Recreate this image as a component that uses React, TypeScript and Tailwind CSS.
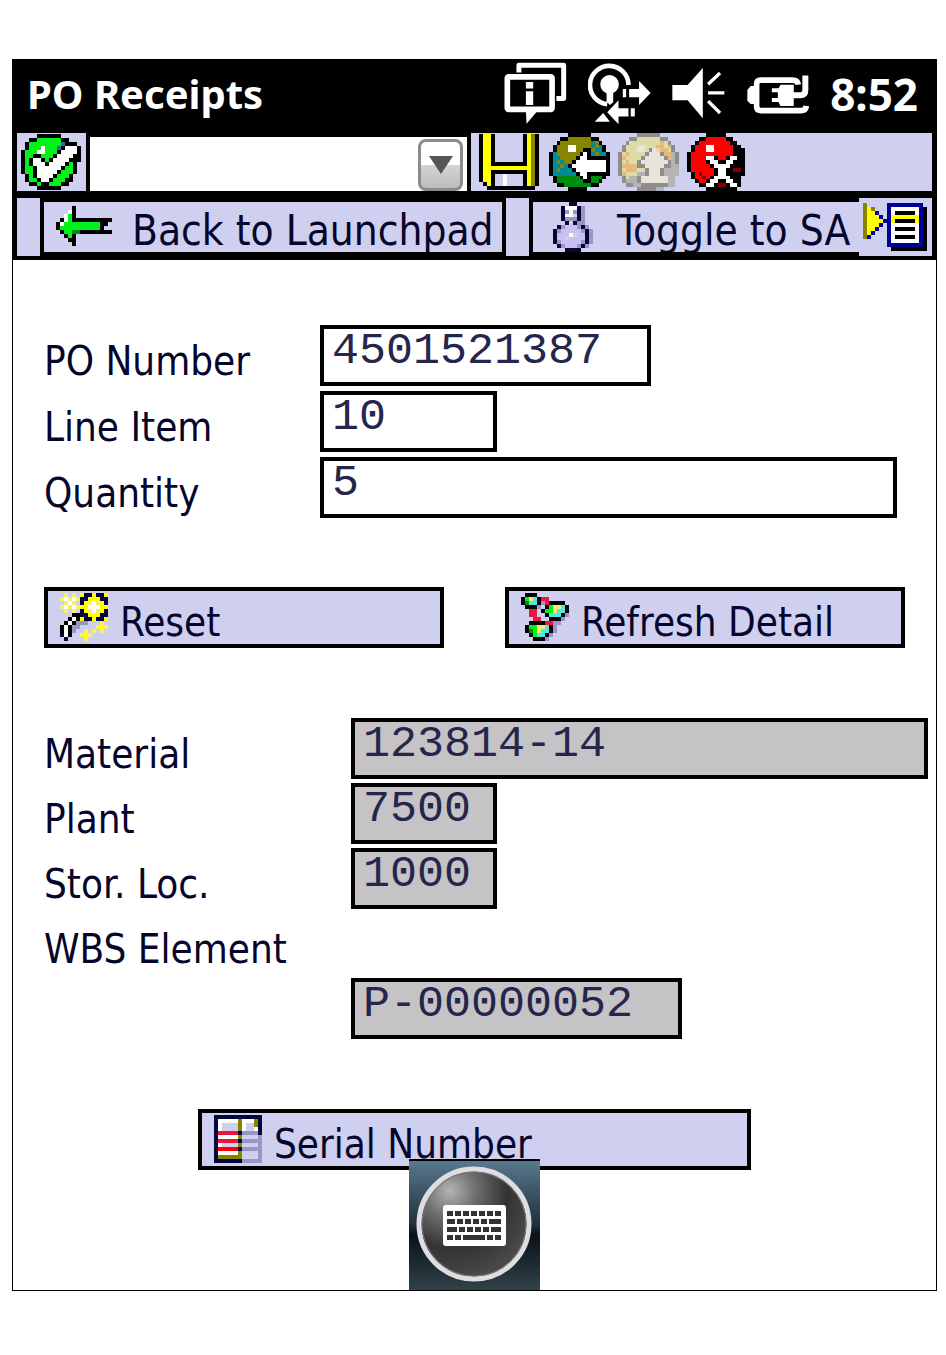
import React, { useState } from "react";
import clsx from "clsx";

const palette: Record<string, string> = {
  K: "#000000",
  W: "#ffffff",
  G: "#00f218",
  E: "#008c10",
  B: "#1c6fae",
  O: "#858500",
  T: "#008a98",
  R: "#ff0000",
  D: "#8a0000",
  Y: "#ffff00",
  y: "#f5f06a",
  L: "#cfcfef",
  P: "#9a96c4",
  V: "#c8c0f0",
  N: "#06063c",
  U: "#00009a",
  g: "#8d8d8d",
  h: "#b4b4b4",
  k: "#dcdca4",
  o: "#e6b87c",
  w: "#e9e4da",
  C: "#4fe6e8",
  S: "#ee1440",
};

const okIcon = [
  "....KKKKKK.....",
  "..KKGGGGGGKK...",
  ".KGGGGGGGGBKKK.",
  ".KGGGWGGGBKWWWK",
  "KGGGWWGGGKWWWWK",
  "KGGKKGGGKWWWWKK",
  "KGKWWKGKWWWWKKK",
  "KGKWWWKWWWWKGK.",
  "KGGKWWWWWWKGGK.",
  "KGGKWWWWWKGGGK.",
  ".KGKWWWWKGGGK..",
  ".KGGKWWKGGGKK..",
  "..KKGKKGGGKK...",
  "....KKKKKK.....",
];

const saveIcon = [
  "KYYKLLLLLLLKYOK",
  "KYYKLLLLLLLKYOK",
  "KYYKLLLLLLLKYOK",
  "KYYKLLLLLLLKYOK",
  "KYYKLLLLLLLKYOK",
  "KYYKLLLLLLLKYOK",
  "KYYKLLLLLLLKYOK",
  "KYYKKKKKKKKKYOK",
  "KYYYYYYYYYYYYOK",
  "KYYKKKKKKKKKYOK",
  "KYYKLLWLLLLKYOK",
  "KYYKLLWLLLLKYOK",
  ".KYKLLWLLLLKYOK",
  "..KKKKKKKKKKKK.",
];

const backIcon = [
  ".....KKKKKK.....",
  "...KKOOOOOOKK...",
  "..KOOOOOOOOTOK..",
  ".KOOOWWOOOOTOTK.",
  ".KOOOWWOOKKOTTK.",
  "KTOOOOOOKWKTOTTK",
  "KTTOOOOKWWKKKKKK",
  "KTOTOOKWWWWWWWWK",
  "KTTOTKWWWWWWWWWK",
  "KTOTTTKWWWWWWWWK",
  "KTTTTTTKWWKKKKKK",
  ".KEEEEEEKWKEEEK.",
  ".KEEEEEEEKKEEK..",
  "..KKEEEEEEEKK...",
  ".....KKKKK......",
];

const upIcon = [
  ".....gggggg.....",
  "...ggkkkkkkgg...",
  "..gkkkkkkkkokg..",
  ".gkkkwwkkkookog.",
  ".gkkkwwkgwkookg.",
  "gkokkkkgwwwgoohg",
  "gokkkkgwwwwwgohg",
  "gkokkgwwwwwwwghg",
  "gooooggwwwwwgghh",
  "gkoookkgwwwghhhh",
  "gokkkhhgwwwghhhh",
  ".gkhhgwwwwwwwhh.",
  ".ghhhgwwwwwwwhh.",
  "..gghhggggggghh.",
  ".....ggggghh....",
];

const cancelIcon = [
  ".....KKKKK.....",
  "...KKRRRRRKK...",
  "..KRRRRRRRRKK..",
  ".KRRRWWRRRRRKK.",
  ".KRRRWWRRRRRKKK",
  "KRRRRRRRRRRRKKK",
  "KRRRRWWKRRKWWKK",
  "KRRRRKWWKKWWKKK",
  "KRRRRRKWWWWKKKK",
  "KRRRRRRKWWKKDDK",
  ".KRDRRRKWWKKKKK",
  ".KRRDRKWWWWKKK.",
  "..KRRKWWKKWWKK.",
  "...KKWWKDDKWWK.",
  ".....KKKKKKKK..",
];

const arrowIcon = [
  "....K.........",
  "...WK.........",
  "..WGK.........",
  ".KWGKKKKKKKKKK",
  "KWGGGGGGGGGKK.",
  "KGGGGGGGGGGK..",
  ".KGGEEKKKKKKKK",
  "..KGK.........",
  "...KK.........",
  "....K.........",
];

const bulbIcon = [
  "....NN....",
  "..NWWWNP..",
  "..NPWPNP..",
  "..NWWLNP..",
  "..NPPPNP..",
  "...NLNPP..",
  ".NPVVVPNP.",
  "NPVVVVVPNP",
  "NVVVWLVVNP",
  "NVVLVVVVNP",
  "NPVVVVVPNP",
  ".NPVVVPNP.",
  "...NNNN...",
];

const menuIcon = [
  "O.....UUUUUUUUU.",
  "OYO...UWWWWWWWUK",
  "OYYU..UWKKKKKWUK",
  "OYYYU.UYYYYYYYUK",
  "OYYYYUUYKKKKKYUK",
  "OYYYU.UWWWWWWWUK",
  "OYYU..UWKKKKKWUK",
  "OYU...UWWWWWWWUK",
  "OU....UWKKKKKWUK",
  "......UWWWWWWWUK",
  "......UUUUUUUUUK",
  ".......KKKKKKKKK",
];

const wandIcon = [
  ".y.y.YNNYNNY",
  "yWyWyNNYYYNN",
  ".yWy.NYyWyYN",
  "yWyWyYYWWWYY",
  ".y.y.NYyWyYN",
  "...KKNNYYYNN",
  "..KWKYNNYNNY",
  ".KWKPPP...y.",
  "KWKPP....yYy",
  "KWKP..y.y.y.",
  "NWK..yYy....",
  ".N....y.....",
];

const graphIcon = [
  ".KKK........",
  "KGyCKSS.....",
  "KECCKPSKKKK.",
  ".KKKP.KGyyCK",
  "..SS.KGGyCCK",
  "..SS..KCCCKP",
  "...SS..KKKP.",
  "..KKKKSSPP..",
  ".KGGyyCKP...",
  ".KEGyCCKP...",
  "..KGCCKP....",
  "...KKKP.....",
];

const serialIcon = [
  "NNNNNNNNNNNN",
  "NWWWWWOWWWON",
  "NWLLLLOWLLON",
  "NWLLLLOWLLWN",
  "NSSSSSNPPPPN",
  "NWWWWWOLLLLP",
  "NSSSSSNPPPPP",
  "NWLLLLOLLLLP",
  "NRRRRRNPPPPP",
  "NWWWWWOLLLLP",
  "NOOOOOOLLLLP",
  "NNNNNNNPPPPP",
];

function PixelIcon({ rows, className }: { rows: string[]; className: string }) {
  return (
    <svg
      viewBox={`0 0 ${rows[0].length} ${rows.length}`}
      preserveAspectRatio="none"
      shapeRendering="crispEdges"
      aria-hidden="true"
      className={clsx("shrink-0", className)}
    >
      {rows.map((row, y) =>
        row
          .split("")
          .map((c, x) =>
            palette[c] ? (
              <rect key={`${x}-${y}`} x={x} y={y} width="1" height="1" fill={palette[c]} />
            ) : null
          )
      )}
    </svg>
  );
}

function StatusIcons() {
  return (
    <>
      <svg viewBox="98 38 190 190" className="h-[63px] w-[63px]" fill="none" stroke="#fff">
        <path d="M143 70V48H278V148H256" strokeWidth="15" strokeLinejoin="round" />
        <rect x="108" y="83" width="135" height="98" rx="4" strokeWidth="17" />
        <path d="M164 184H200L166 224Z" fill="#fff" stroke="none" />
        <path d="M164 98H186V118H164ZM164 126H186V168H164Z" fill="#fff" stroke="none" />
      </svg>
      <svg viewBox="340 42 190 186" className="h-[62px] w-[63px]">
        <path d="M398 166A58 58 0 1 1 462 108" fill="none" stroke="#fff" strokeWidth="14" />
        <circle cx="405" cy="106" r="28" fill="#fff" />
        <path d="M396 125H416V160L406 168L396 158Z" fill="#fff" />
        <path d="M445 120H455V145H445ZM464 120H494V96L529 132L494 168V145H464Z" fill="#fff" />
        <path d="M398 190L432 154V178H462V203H432V226ZM469 178H481V203H469Z" fill="#fff" />
        <path d="M360 219L386 192L406 219Z" fill="#fff" />
      </svg>
      <svg viewBox="595 55 160 160" className="h-[53px] w-[53px]">
        <path d="M596 109H642L688 58V210L642 155H596Z" fill="#fff" />
        <path d="M704 107L740 73M704 133H753M704 158L740 194" stroke="#fff" strokeWidth="10" />
      </svg>
      <svg viewBox="122 72 190 120" className="h-[40px] w-[63px]" fill="none" stroke="#fff">
        <path d="M280 104Q278 90 262 90H166Q154 90 154 102V170Q154 182 166 182H288Q302 182 304 168" strokeWidth="17" />
        <path d="M152 108H136L126 120V152L136 162H152Z" fill="#fff" stroke="none" />
        <path d="M226 104H266V168H226L218 152V120Z" fill="#fff" stroke="none" />
        <path d="M200 121H226M200 150H226" strokeWidth="12" />
        <path d="M264 136H286Q301 136 301 120V76" strokeWidth="18" />
      </svg>
    </>
  );
}

function KeyboardIcon() {
  const keys = [
    [[0, 6], [8, 6], [16, 6], [24, 6], [32, 6], [40, 6], [48, 6]],
    [[0, 8], [10, 6], [18, 6], [26, 6], [34, 6], [42, 12]],
    [[0, 10], [12, 6], [20, 6], [28, 6], [36, 6], [44, 10]],
    [[0, 6], [8, 6], [16, 22], [40, 6], [48, 6]],
  ];
  return (
    <svg viewBox="0 0 131 131" className="block h-full w-full" aria-hidden="true">
      <defs>
        <linearGradient id="kb-bg" x1="0" y1="0" x2="0" y2="1">
          <stop offset="0" stopColor="#5a7b90" />
          <stop offset="0.5" stopColor="#20303a" />
          <stop offset="0.58" stopColor="#0a1218" />
          <stop offset="1" stopColor="#2f4248" />
        </linearGradient>
        <radialGradient id="kb-face" cx="0.28" cy="0.2" r="0.8">
          <stop offset="0" stopColor="#b4b4b4" />
          <stop offset="0.3" stopColor="#6e6e6e" />
          <stop offset="0.65" stopColor="#333333" />
          <stop offset="1" stopColor="#484848" />
        </radialGradient>
      </defs>
      <rect width="131" height="131" fill="url(#kb-bg)" />
      <rect width="131" height="2" fill="#000" />
      <circle cx="65" cy="65" r="55" fill="url(#kb-face)" stroke="#dedee2" strokeWidth="5" />
      <circle cx="65" cy="65" r="52" fill="none" stroke="#777" strokeWidth="1" />
      <rect x="34" y="46" width="63" height="41" rx="3" fill="#fff" />
      {keys.map((row, i) =>
        row.map(([x, w]) => (
          <rect key={`${i}-${x}`} x={38 + x} y={52 + i * 8} width={w} height="5" fill="#333" />
        ))
      )}
    </svg>
  );
}

type FieldProps = {
  id: string;
  label: string;
  width: string;
  value: string;
  onChange?: (value: string) => void;
  inputClass?: string;
};

function Field({ id, label, width, value, onChange, inputClass }: FieldProps) {
  return (
    <>
      <label htmlFor={id} className="flex h-[61px] items-center whitespace-nowrap pt-2.5">
        {label}
      </label>
      <input
        id={id}
        value={value}
        readOnly={!onChange}
        onChange={(e) => onChange?.(e.target.value)}
        className={clsx(
          "h-[61px] max-w-full rounded-none border-4 border-black pb-2 pl-2 text-[45px] leading-[45px] text-[#26264c] outline-none",
          "font-['Liberation_Mono',monospace]",
          onChange ? "bg-white" : "bg-[#c6c3c6]",
          width,
          inputClass
        )}
      />
    </>
  );
}

function ActionButton({
  icon,
  children,
  className,
  onClick,
}: {
  icon: string[];
  children: React.ReactNode;
  className?: string;
  onClick?: () => void;
}) {
  return (
    <button
      onClick={onClick}
      className={clsx(
        "flex h-[61px] items-start gap-3 overflow-hidden border-4 border-black bg-[#cfcfef] pl-3 text-left",
        className
      )}
    >
      <PixelIcon rows={icon} className="mt-0.5 h-[48px] w-[48px]" />
      <span className="whitespace-nowrap pt-2 leading-[46px]">{children}</span>
    </button>
  );
}

export default function App() {
  const [po, setPo] = useState("4501521387");
  const [line, setLine] = useState("10");
  const [quantity, setQuantity] = useState("5");

  function reset() {
    setPo("");
    setLine("");
    setQuantity("");
  }

  return (
    <div className="min-h-screen bg-white pb-16 pl-3 pr-[9px] pt-[59px]">
      <div className="border border-black font-['DejaVu_Sans_Condensed','DejaVu_Sans',sans-serif] text-[40px] text-[#06062c]">
        <header className="flex h-[73px] items-center justify-between bg-black pb-1.5 pl-3.5 pr-[18px] font-['Noto_Sans',sans-serif] font-bold text-white">
          <h1 className="text-[40px] leading-[60px]">PO Receipts</h1>
          <div className="flex items-center gap-[21px]">
            <StatusIcons />
            <time className="text-[44px] leading-[60px]">8:52</time>
          </div>
        </header>

        <div className="bg-black px-1 pb-1">
          <div className="flex h-[58px]">
            <button aria-label="Enter" className="flex w-[69px] items-center bg-[#cfcfef] pl-1">
              <PixelIcon rows={okIcon} className="h-[56px] w-[60px]" />
            </button>
            <div className="relative mx-1 mt-1 w-[377px]">
              <select aria-label="Command" className="h-full w-full appearance-none rounded-none bg-white pl-2 outline-none">
                <option></option>
              </select>
              <div className="pointer-events-none absolute bottom-0 right-1 top-0.5 flex w-[45px] items-center justify-center rounded-lg border-3 border-[#8c8c8c] bg-linear-to-b from-white from-50% via-[#d4d4d4] via-50% to-[#bdbdbd]">
                <svg viewBox="0 0 24 18" className="h-[18px] w-[24px]">
                  <path d="M0 0H24L12 18Z" fill="#555" />
                </svg>
              </div>
            </div>
            <div className="flex flex-1 bg-[#cfcfef] pl-2">
              <button aria-label="Save" className="mr-2.5">
                <PixelIcon rows={saveIcon} className="h-[56px] w-[60px]" />
              </button>
              <button aria-label="Back" className="mr-2">
                <PixelIcon rows={backIcon} className="h-[58px] w-[61px]" />
              </button>
              <button aria-label="Exit" className="mr-2">
                <PixelIcon rows={upIcon} className="h-[58px] w-[61px]" />
              </button>
              <button aria-label="Cancel">
                <PixelIcon rows={cancelIcon} className="h-[58px] w-[58px]" />
              </button>
            </div>
          </div>

          <div className="mt-[7px] flex h-[58px] gap-1 text-[42px] leading-[50px]">
            <div className="w-[23px] bg-[#cfcfef]"></div>
            <button className="my-1 flex w-[458px] items-start gap-5 overflow-hidden bg-[#cfcfef] pl-3">
              <PixelIcon rows={arrowIcon} className="mt-1 h-[40px] w-[56px]" />
              <span className="whitespace-nowrap pt-1">Back to Launchpad</span>
            </button>
            <div className="w-[23px] bg-[#cfcfef]"></div>
            <div className="flex min-w-0 flex-1">
              <button className="my-1 flex min-w-0 flex-1 items-start gap-6 overflow-hidden bg-[#cfcfef] pl-5">
                <PixelIcon rows={bulbIcon} className="h-[50px] w-[40px]" />
                <span className="whitespace-nowrap pt-1">Toggle to SA</span>
              </button>
              <button aria-label="Menu" className="w-[73px] bg-[#cfcfef] pl-1">
                <PixelIcon rows={menuIcon} className="h-[48px] w-[64px]" />
              </button>
            </div>
          </div>
        </div>

        <main className="flex flex-col bg-white pt-[65px]">
          <section className="grid grid-cols-[276px_1fr] gap-y-[5px] pl-[31px] pr-2">
            <Field id="po" label="PO Number" width="w-[331px]" value={po} onChange={setPo} />
            <Field id="line" label="Line Item" width="w-[177px]" value={line} onChange={setLine} />
            <Field id="qty" label="Quantity" width="w-[577px]" value={quantity} onChange={setQuantity} />
          </section>

          <div className="mt-[69px] flex gap-[61px] px-[31px]">
            <ActionButton icon={wandIcon} className="flex-1" onClick={reset}>
              Reset
            </ActionButton>
            <ActionButton icon={graphIcon} className="flex-1">
              Refresh Detail
            </ActionButton>
          </div>

          <section className="mt-[70px] grid grid-cols-[307px_1fr] gap-y-1 pl-[31px] pr-2">
            <Field id="material" label="Material" width="w-[577px]" value="123814-14" />
            <Field id="plant" label="Plant" width="w-[146px]" value="7500" />
            <Field id="sloc" label="Stor. Loc." width="w-[146px]" value="1000" />
            <Field id="wbs" label="WBS Element" width="w-[331px]" value="P-00000052" inputClass="col-start-2 row-start-5" />
          </section>

          <ActionButton icon={serialIcon} className="mt-[70px] w-[553px] self-center">
            Serial Number
          </ActionButton>
          <button aria-label="Show keyboard" className="relative -mt-[11px] h-[131px] w-[131px] self-center">
            <KeyboardIcon />
          </button>
        </main>
      </div>
    </div>
  );
}
